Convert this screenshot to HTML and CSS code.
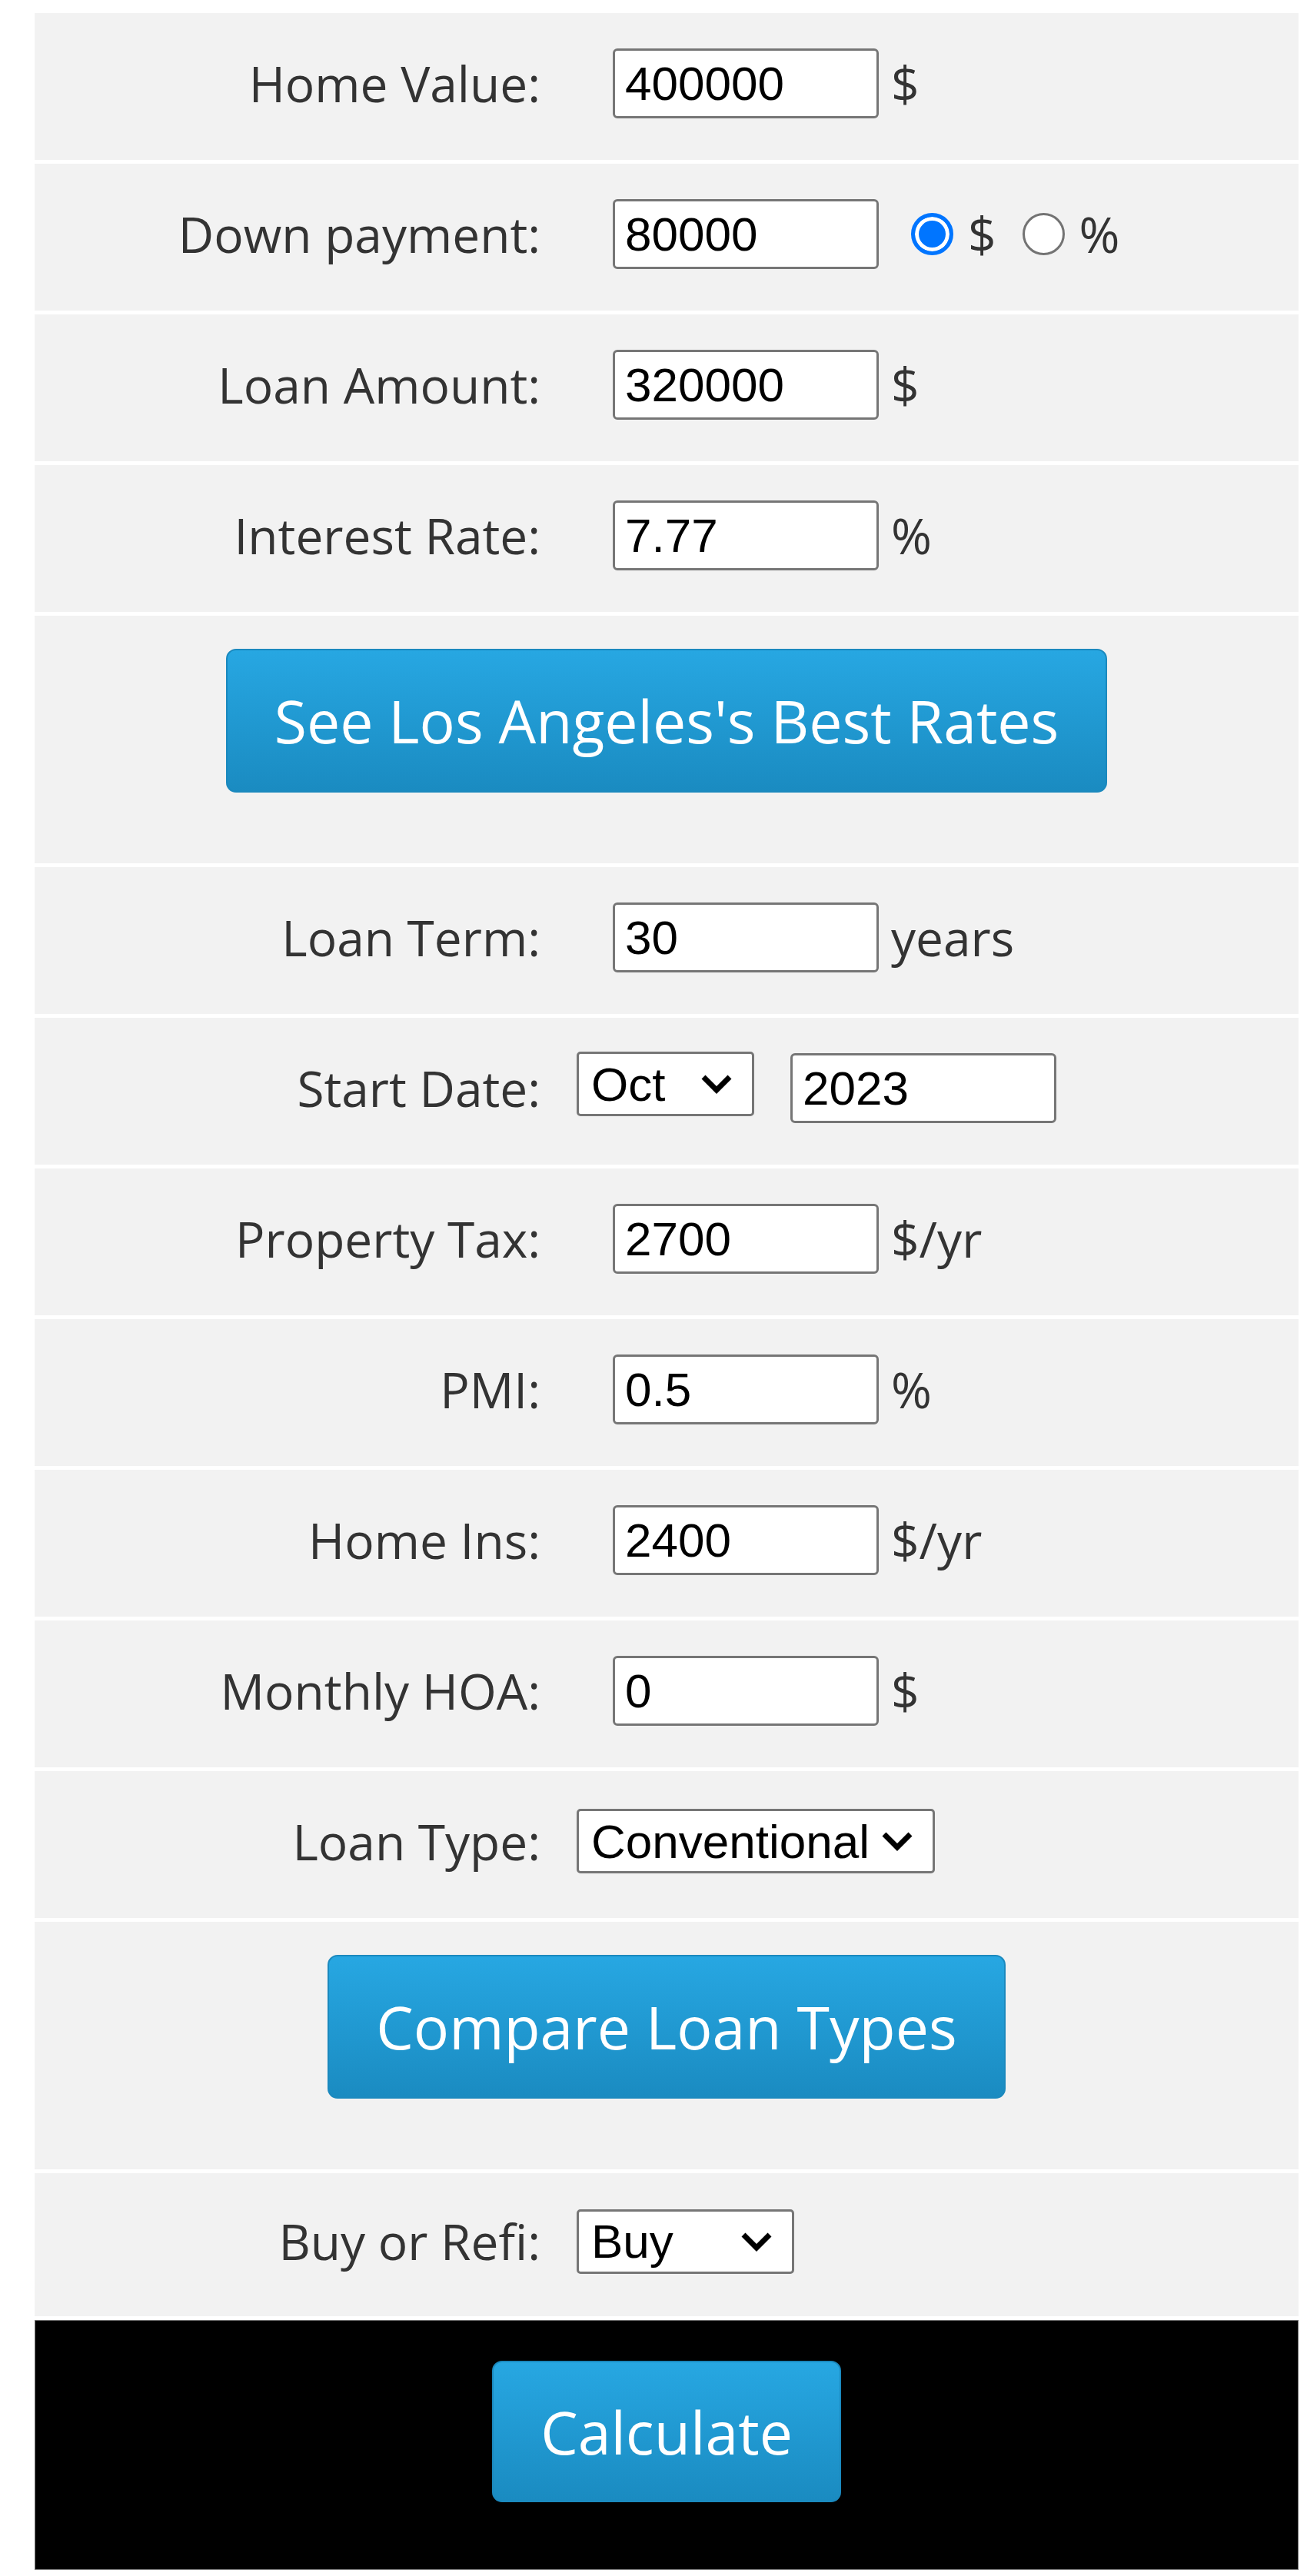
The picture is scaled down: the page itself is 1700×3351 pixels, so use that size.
FILE: index.html
```html
<!DOCTYPE html>
<html lang="en">
<head>
<meta charset="utf-8">
<title>Mortgage Calculator</title>
<link rel="stylesheet" href="styles.css">
</head>
<body>
<form class="calc">
  <div class="row">
    <label class="lbl">Home Value:</label>
    <div class="ctl"><input class="txt" type="text" value="400000"><span class="unit">$</span></div>
  </div>
  <div class="row">
    <label class="lbl">Down payment:</label>
    <div class="ctl">
      <input class="txt" type="text" value="80000">
      <input class="radio radio-first" type="radio" name="dp" checked><span class="runit">$</span>
      <input class="radio" type="radio" name="dp"><span class="runit">%</span>
    </div>
  </div>
  <div class="row">
    <label class="lbl">Loan Amount:</label>
    <div class="ctl"><input class="txt" type="text" value="320000"><span class="unit">$</span></div>
  </div>
  <div class="row">
    <label class="lbl">Interest Rate:</label>
    <div class="ctl"><input class="txt" type="text" value="7.77"><span class="unit">%</span></div>
  </div>
  <div class="row row-btn">
    <button class="btn" type="button">See Los Angeles's Best Rates</button>
  </div>
  <div class="row">
    <label class="lbl">Loan Term:</label>
    <div class="ctl"><input class="txt" type="text" value="30"><span class="unit">years</span></div>
  </div>
  <div class="row row-date">
    <label class="lbl">Start Date:</label>
    <div class="ctl">
      <span class="sel sel-month">
        <select><option>Oct</option></select>
        <svg class="chev" viewBox="0 0 42 26" width="42" height="26"><path d="M4 4 L21 21 L38 4" fill="none" stroke="#000" stroke-width="7"/></svg>
      </span>
      <input class="txt" type="text" value="2023">
    </div>
  </div>
  <div class="row">
    <label class="lbl">Property Tax:</label>
    <div class="ctl"><input class="txt" type="text" value="2700"><span class="unit">$/yr</span></div>
  </div>
  <div class="row">
    <label class="lbl">PMI:</label>
    <div class="ctl"><input class="txt" type="text" value="0.5"><span class="unit">%</span></div>
  </div>
  <div class="row">
    <label class="lbl">Home Ins:</label>
    <div class="ctl"><input class="txt" type="text" value="2400"><span class="unit">$/yr</span></div>
  </div>
  <div class="row">
    <label class="lbl">Monthly HOA:</label>
    <div class="ctl"><input class="txt" type="text" value="0"><span class="unit">$</span></div>
  </div>
  <div class="row">
    <label class="lbl">Loan Type:</label>
    <div class="ctl">
      <span class="sel sel-type">
        <select><option>Conventional</option></select>
        <svg class="chev" viewBox="0 0 42 26" width="42" height="26"><path d="M4 4 L21 21 L38 4" fill="none" stroke="#000" stroke-width="7"/></svg>
      </span>
    </div>
  </div>
  <div class="row row-btn">
    <button class="btn" type="button">Compare Loan Types</button>
  </div>
  <div class="row row-last">
    <label class="lbl">Buy or Refi:</label>
    <div class="ctl">
      <span class="sel sel-buy">
        <select><option>Buy</option></select>
        <svg class="chev" viewBox="0 0 42 26" width="42" height="26"><path d="M4 4 L21 21 L38 4" fill="none" stroke="#000" stroke-width="7"/></svg>
      </span>
    </div>
  </div>
  <div class="foot">
    <button class="btn btn-calc" type="button">Calculate</button>
  </div>
</form>
</body>
</html>
```

FILE: styles.css
```css
* {
  box-sizing: border-box;
}

body {
  margin: 0;
  background: #fff;
  font-family: "Open Sans", "Noto Sans", sans-serif;
}

.calc {
  margin: 17px 0 0 45px;
  width: 1644px;
  display: flex;
  flex-direction: column;
  gap: 5px;
}

.row {
  background: #f2f2f2;
  height: 191px;
  display: flex;
  align-items: center;
  padding-bottom: 9px;
}

.row-last {
  height: 186px;
}

.lbl {
  flex: none;
  width: 658px;
  text-align: right;
  font-size: 64px;
  color: #333;
}

.ctl {
  margin-left: 47px;
  display: flex;
  align-items: center;
}

.txt {
  margin: 0 0 0 47px;
  width: 346px;
  height: 91px;
  border: 3px solid #767676;
  border-radius: 6px;
  padding: 0 13px;
  background: #fff;
  color: #000;
  font: 62px "Liberation Sans", Arial, sans-serif;
  outline: none;
}

.unit {
  margin-left: 16px;
  font-size: 64px;
  color: #333;
}

.radio {
  appearance: none;
  -webkit-appearance: none;
  margin: 0 0 0 34px;
  width: 55px;
  height: 55px;
  border-radius: 50%;
  border: 3px solid #737373;
  background: #fff;
}

.radio-first {
  margin-left: 42px;
}

.radio:checked {
  border: 5px solid #0075ff;
  background: #0075ff;
  box-shadow: inset 0 0 0 5px #fff;
}

.runit {
  margin-left: 19px;
  font-size: 64px;
  color: #333;
}

.sel {
  position: relative;
  display: inline-block;
}

.sel select {
  appearance: none;
  -webkit-appearance: none;
  display: block;
  margin: 0;
  height: 84px;
  border: 3px solid #767676;
  border-radius: 5px;
  padding: 0 70px 0 16px;
  background: #fff;
  color: #000;
  font: 62px "Liberation Sans", Arial, sans-serif;
  outline: none;
}

.sel-month select {
  width: 231px;
}

.sel-type select {
  width: 466px;
}

.sel-buy select {
  width: 283px;
}

.row-date .sel {
  margin-bottom: 10px;
}

.chev {
  position: absolute;
  right: 28px;
  top: 50%;
  transform: translateY(-50%);
  pointer-events: none;
}

.row-btn {
  height: 322px;
  justify-content: center;
  align-items: flex-start;
  padding: 43px 0 0;
}

.btn {
  height: 187px;
  padding: 0 61px;
  margin: 0;
  border: 2px solid #1b89be;
  border-radius: 13px;
  background: linear-gradient(#27a7e2, #1a8bc1);
  color: #fff;
  font: 77px "Open Sans", "Noto Sans", sans-serif;
  line-height: 1;
  cursor: pointer;
}

.foot {
  height: 325px;
  background: #000;
  border: 1px solid #707070;
  display: flex;
  justify-content: center;
  align-items: flex-start;
  padding-top: 52px;
}

.btn-calc {
  height: 184px;
}
```
